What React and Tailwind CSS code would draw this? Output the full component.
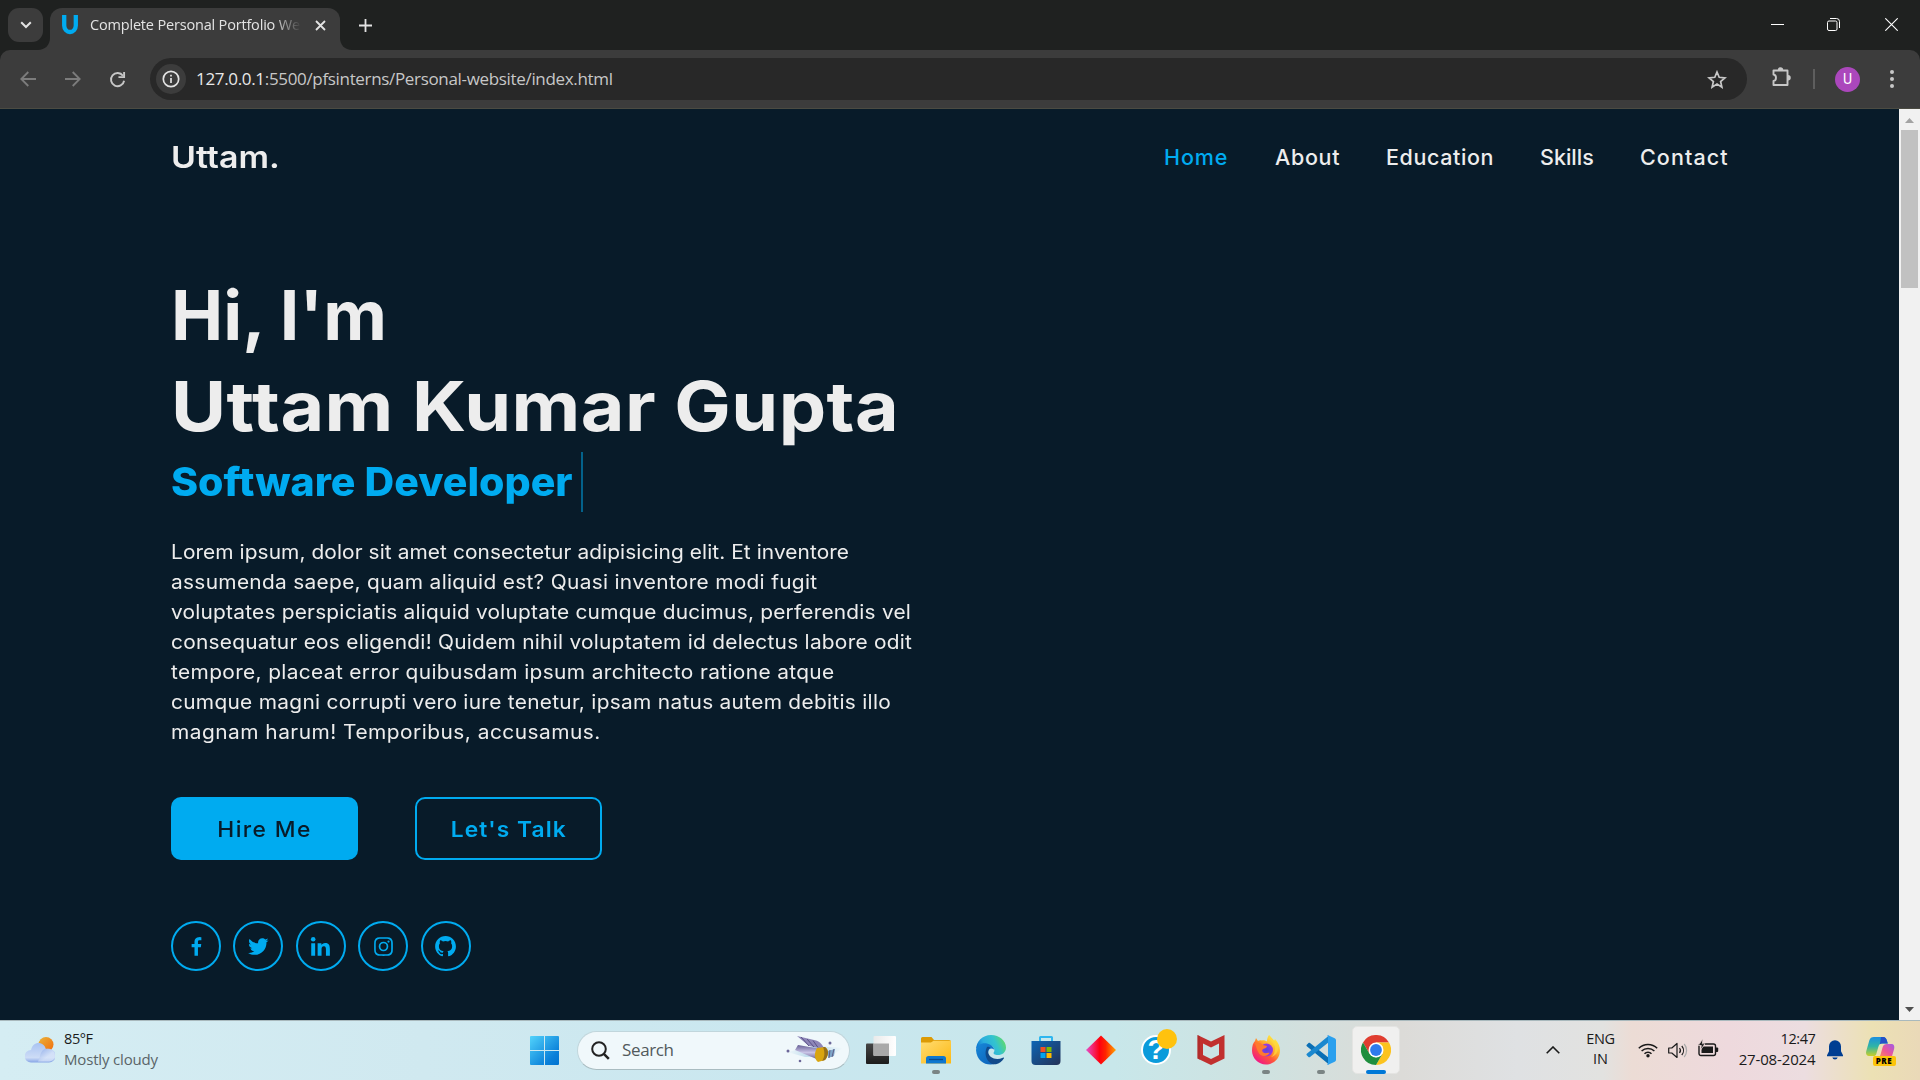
import React from "react";
import {
  BiLogoFacebook,
  BiLogoTwitter,
  BiLogoLinkedin,
  BiLogoInstagram,
  BiLogoGithub,
} from "react-icons/bi";

function TabStrip() {
  return (
    <div className="flex h-[50px] shrink-0 bg-[#1f2120] text-[#e3e3e3]">
      <div className="ml-2 mt-2 flex h-[34px] w-[35px] items-center justify-center rounded-[11px] bg-[#3c3c3c]">
        <svg width="12" height="8" viewBox="0 0 12 8" fill="none" stroke="#e3e3e3" strokeWidth="2">
          <path d="M1.2 1.2 6 6l4.800-4.800" />
        </svg>
      </div>
      <svg className="-ml-[5px] mt-[38px] h-3 w-3" viewBox="0 0 12 12">
        <path d="M12 0v12H0C7 12 12 7 12 0Z" fill="#3c3c3c" />
      </svg>
      <div className="mt-2 flex h-[42px] w-[290px] items-start rounded-t-[12px] bg-[#3c3c3c]">
        <svg className="ml-3 mt-[7px]" width="16" height="20" viewBox="0 0 16 20" fill="none" stroke="#00abf0" strokeWidth="4.300">
          <path d="M2.200 0v10.500a5.800 6.500 0 0 0 11.600 0V0" />
        </svg>
        <div className="ml-3 w-[211px] overflow-hidden whitespace-nowrap text-[14.5px] leading-[34px] tracking-[-0.18px] [mask-image:linear-gradient(to_right,black_87%,transparent_100%)]">
          Complete Personal Portfolio We
        </div>
        <svg className="ml-[14px] mt-3" width="11" height="11" viewBox="0 0 11 11" stroke="#e3e3e3" strokeWidth="1.800">
          <path d="m1 1 9 9M10 1l-9 9" />
        </svg>
      </div>
      <svg className="mt-[38px] h-3 w-3" viewBox="0 0 12 12">
        <path d="M0 0v12h12C5 12 0 7 0 0Z" fill="#3c3c3c" />
      </svg>
      <svg className="ml-[7px] mt-[19px]" width="13" height="13" viewBox="0 0 13 13" stroke="#e3e3e3" strokeWidth="1.800">
        <path d="M6.500 0v13M0 6.500h13" />
      </svg>
      <div className="ml-auto mr-[22px] flex h-[49px] items-center">
        <svg className="mr-[43px]" width="13" height="13" viewBox="0 0 13 13" stroke="#fff" strokeWidth="1">
          <path d="M0 6.500h13" />
        </svg>
        <svg className="mr-[45px]" width="13" height="13" viewBox="0 0 13 13" fill="none" stroke="#fff" strokeWidth="1">
          <rect x=".5" y="3" width="9.500" height="9.500" rx="1.500" />
          <path d="M3 .5h6.500a3 3 0 0 1 3 3V10" />
        </svg>
        <svg width="13" height="13" viewBox="0 0 13 13" stroke="#fff" strokeWidth="1.100">
          <path d="m.3.3 12.400 12.400M12.700.3.3 12.700" />
        </svg>
      </div>
    </div>
  );
}

function Toolbar() {
  return (
    <div className="bg-[#1f2120]">
      <div className="flex h-[59px] items-center rounded-t-[10px] border-b border-[#4b4b42] bg-[#3c3c3c]">
        <svg className="ml-5" width="16" height="16" viewBox="0 0 16 16" fill="none" stroke="#7c7c7c" strokeWidth="1.800">
          <path d="M16 8H1.500M8.300 1 1.300 8l7 7" />
        </svg>
        <svg className="ml-[29px]" width="16" height="16" viewBox="0 0 16 16" fill="none" stroke="#7c7c7c" strokeWidth="1.800">
          <path d="M0 8h14.500M7.700 1l7 7-7 7" />
        </svg>
        <svg className="ml-[28px]" width="17" height="17" viewBox="0 0 18 18" fill="none" stroke="#c7c7c7" strokeWidth="2">
          <path d="M14.800 5A7 7 0 1 0 16 10.300" />
          <path d="M16 1v5.500h-6" />
        </svg>
        <div className="ml-6 flex h-[42px] w-[1597px] items-center rounded-full bg-[#282828]">
          <div className="ml-[6px] flex h-[30px] w-[30px] items-center justify-center rounded-full bg-[#3c3c3c]">
            <svg width="18" height="18" viewBox="0 0 18 18" fill="none" stroke="#e3e3e3" strokeWidth="1.700">
              <circle cx="9" cy="9" r="7.700" />
              <path d="M9 8v5M9 4.800v1.700" />
            </svg>
          </div>
          <span className="ml-[10px] whitespace-nowrap text-[17px] leading-[42px] tracking-[-0.33px] text-[#c7c7c7]">
            <span className="text-[#e8e8e8]">127.0.0.1</span>:5500/pfsinterns/Personal-website/index.html
          </span>
          <svg className="ml-auto mr-5" width="20" height="19" viewBox="0 0 20 19" fill="none" stroke="#c7c7c7" strokeWidth="1.700">
            <path d="m10 2 2.200 5.300 5.700.5-4.300 3.700 1.300 5.600L10 14.100l-4.900 3 1.300-5.600L2.100 7.800l5.700-.5Z" />
          </svg>
        </div>
        <svg className="mb-1 ml-6" width="21" height="21" viewBox="0 0 21 21">
          <path d="M2.500 3.500h14v14.500h-14v-4c3.300-.3 3.300-6.200 0-6.500Z" fill="none" stroke="#c7c7c7" strokeWidth="1.900" strokeLinejoin="round" />
          <path d="M6.800 3a2.700 2.700 0 0 1 5.400 0ZM17 8a2.700 2.700 0 0 1 0 5.500Z" fill="#c7c7c7" />
        </svg>
        <div className="ml-[21px] h-5 w-[2px] bg-[#5e5e5e]" />
        <div className="ml-5 flex h-[25px] w-[25px] items-center justify-center rounded-full bg-[#ab47bc] font-['Roboto'] text-[14px] text-white">
          U
        </div>
        <div className="ml-[30px] flex flex-col gap-[3px]">
          <div className="h-1 w-1 rounded-full bg-[#c7c7c7]" />
          <div className="h-1 w-1 rounded-full bg-[#c7c7c7]" />
          <div className="h-1 w-1 rounded-full bg-[#c7c7c7]" />
        </div>
      </div>
    </div>
  );
}

const INTRO = [
  ["Lorem ipsum, dolor sit amet consectetur adipisicing elit. Et inventore", "tracking-[0.075px]"],
  ["assumenda saepe, quam aliquid est? Quasi inventore modi fugit", "tracking-[0.285px]"],
  ["voluptates perspiciatis aliquid voluptate cumque ducimus, perferendis vel", "tracking-[0.203px]"],
  ["consequatur eos eligendi! Quidem nihil voluptatem id delectus labore odit", "tracking-[0.235px]"],
  ["tempore, placeat error quibusdam ipsum architecto ratione atque", "tracking-[0.34px]"],
  ["cumque magni corrupti vero iure tenetur, ipsam natus autem debitis illo", "tracking-[0.275px]"],
  ["magnam harum! Temporibus, accusamus.", "tracking-[0.45px]"],
];

const SOCIALS = [BiLogoFacebook, BiLogoTwitter, BiLogoLinkedin, BiLogoInstagram, BiLogoGithub];

function Page() {
  return (
    <div className="flex min-h-0 flex-1">
      <div className="flex-1 whitespace-nowrap bg-[#081b29] pl-[171px] pr-[170px] font-['Inter',sans-serif] text-[#ededed] [font-optical-sizing:none]">
        <header className="flex h-24 items-center justify-between">
          <div className="origin-left scale-x-[1.13] text-[30px] font-semibold">Uttam.</div>
          <nav className="flex text-[21.5px] font-medium">
            <a className="w-[111px] tracking-[0.9px] text-[#00abf0]">Home</a>
            <a className="w-[111px] tracking-[0.7px]">About</a>
            <a className="w-[154px] tracking-[0.6px]">Education</a>
            <a className="w-[100px]">Skills</a>
            <a className="w-[89px] tracking-[1.1px]">Contact</a>
          </nav>
        </header>
        <main className="pt-[65px]">
          <h1 className="text-[68.5px] font-bold leading-[91px]">
            <div className="origin-left scale-x-[1.02]">Hi, I'm</div>
            <div className="origin-left scale-x-[1.1] tracking-[0.4px]">Uttam Kumar Gupta</div>
          </h1>
          <div className="flex h-[60px] items-center">
            <div className="w-[402px] pt-[2px]">
              <div className="origin-left scale-x-[1.04] text-[39.5px] font-extrabold text-[#00abf0]">Software Developer</div>
            </div>
            <div className="ml-2 h-[60px] w-[2px] bg-[#03628b]" />
          </div>
          <p className="mt-[25px] origin-left scale-x-[1.07] text-[19.5px] leading-[30px]">
            {INTRO.map(([line, tracking]) => (
              <span key={line} className={"block " + tracking}>{line}</span>
            ))}
          </p>
          <div className="mt-[50px] flex gap-[57px] text-[21.5px] font-semibold">
            <div className="flex h-[63px] w-[187px] items-center justify-center rounded-[10px] bg-[#00abf0] pt-px font-medium text-[#081b29]">
              <span className="scale-x-[1.06] tracking-[1.3px]">Hire Me</span>
            </div>
            <div className="flex h-[63px] w-[187px] items-center justify-center rounded-[10px] border-2 border-[#00abf0] pt-px text-[#00abf0]">
              <span className="scale-x-[1.06] tracking-[1px]">Let's Talk</span>
            </div>
          </div>
          <div className="mt-[61px] flex gap-[12.4px]">
            {SOCIALS.map((Icon, i) => (
              <div key={i} className="flex h-[50px] w-[50px] items-center justify-center rounded-full border-2 border-[#00abf0]">
                <Icon className="h-[25px] w-[25px] text-[#00abf0]" />
              </div>
            ))}
          </div>
        </main>
      </div>
      <div className="flex w-[21px] flex-col items-center bg-[#f1f1f1]">
        <svg className="mt-[9px] shrink-0" width="9" height="5" viewBox="0 0 9 5"><path d="M4.500 0 9 5H0Z" fill="#a3a3a3" /></svg>
        <div className="mt-[7px] h-[158px] w-[17px] bg-[#c1c1c1]" />
        <svg className="mb-2 mt-auto" width="9" height="5" viewBox="0 0 9 5"><path d="M0 0h9L4.500 5Z" fill="#505050" /></svg>
      </div>
    </div>
  );
}

function WeatherIcon() {
  return (
    <svg width="30" height="26" viewBox="0 0 30 26">
      <defs>
        <linearGradient id="sun" x1="0" y1="0" x2="1" y2="1"><stop offset="0" stopColor="#e9b43b" /><stop offset="1" stopColor="#f26a0c" /></linearGradient>
        <linearGradient id="cloud" x1="0" y1="0" x2="0" y2="1"><stop offset="0" stopColor="#a9c3f2" /><stop offset=".75" stopColor="#cddcf6" /><stop offset="1" stopColor="#86a5e6" /></linearGradient>
        <linearGradient id="puff" x1="0" y1="0" x2="1" y2="1"><stop offset="0" stopColor="#7f9fe4" /><stop offset=".6" stopColor="#d9e5f9" /></linearGradient>
      </defs>
      <circle cx="21" cy="7.500" r="7.500" fill="url(#sun)" />
      <path d="M6 25.500a6 6 0 0 1 0-12.500C7 8.500 10 6 13.500 6s6.500 2.500 7.300 6H24a6.500 6.500 0 0 1 0 13.500Z" fill="url(#cloud)" />
      <path d="M15 19c1-5 4-8 8-7.500 9 1 9 13 0 13H13Z" fill="url(#puff)" opacity=".7" />
    </svg>
  );
}

function WindowsIcon() {
  return (
    <svg width="29" height="29" viewBox="0 0 29 29">
      <defs>
        <linearGradient id="win" x1="0" y1="0" x2="29" y2="29" gradientUnits="userSpaceOnUse"><stop offset="0" stopColor="#52d3fb" /><stop offset=".75" stopColor="#0a80d9" /><stop offset="1" stopColor="#0173d0" /></linearGradient>
      </defs>
      <path d="M1 0h13v14H0V1a1 1 0 0 1 1-1ZM15 0h13a1 1 0 0 1 1 1v13H15ZM0 15h14v14H1a1 1 0 0 1-1-1ZM15 15h14v13a1 1 0 0 1-1 1H15Z" fill="url(#win)" />
    </svg>
  );
}

function FlashlightArt() {
  return (
    <svg width="62" height="32" viewBox="0 0 62 32">
      <defs>
        <linearGradient id="beam" x1="0" y1="0" x2="1" y2="0"><stop offset="0" stopColor="#a6cfe6" stopOpacity="0" /><stop offset=".5" stopColor="#9dc8e2" /><stop offset="1" stopColor="#b8dcec" stopOpacity="0" /></linearGradient>
        <linearGradient id="tube" x1="0" y1="0" x2="0" y2="1"><stop offset="0" stopColor="#675f96" /><stop offset=".5" stopColor="#c9c4e6" /><stop offset="1" stopColor="#5d5589" /></linearGradient>
      </defs>
      <path d="M4 18 32 12l28 2-12 8-26 1Z" fill="url(#beam)" opacity=".8" />
      <path d="m14 2 17 4c6 1 9 5 10 9L26 12Z" fill="#8e86b8" />
      <path d="m18 3 8 9M24 5l7 8M30 6.500l5 7" stroke="#5a5288" strokeWidth="1" />
      <path d="m15 11 23 4-2 11-24-10Z" fill="url(#tube)" />
      <path d="m34 14 8-1c4 3 4 8 0 13l-7 2c-4-3-4-9-1-14Z" fill="#d9a50f" />
      <path d="m40 13 2 0c4 3 4 8 0 13l-3 1c3-4 3-9 1-14Z" fill="#96701a" />
      <path d="m45 17 7-2-1 7-6 2Z" fill="#7ea6c9" />
      <path d="m47 16-1 8M51 15l-2 8" stroke="#5e5d86" strokeWidth="1" />
      <circle cx="5" cy="17" r="1.500" fill="#6c6799" />
      <circle cx="17" cy="27" r="1.300" fill="#6c6799" />
      <circle cx="47" cy="9" r="1.500" fill="#6c6799" />
    </svg>
  );
}

function TaskViewIcon() {
  return (
    <svg width="30" height="30" viewBox="0 0 30 30">
      <defs>
        <linearGradient id="tvd" x1="0" y1="0" x2="0" y2="1"><stop offset="0" stopColor="#454545" /><stop offset="1" stopColor="#1c1c1c" /></linearGradient>
        <linearGradient id="tvl" x1="0" y1="0" x2="1" y2="0"><stop offset="0" stopColor="#e9eaea" /><stop offset="1" stopColor="#fff" /></linearGradient>
      </defs>
      <rect y="8.500" width="23" height="20.500" rx="1" fill="url(#tvd)" />
      <rect x="7.500" y="1" width="22.500" height="20" rx="1" fill="url(#tvl)" />
      <path d="M7.500 8.500H23V21H8.500a1 1 0 0 1-1-1Z" fill="#a9a9a9" />
    </svg>
  );
}

function FolderIcon() {
  return (
    <svg width="30" height="30" viewBox="0 0 30 30">
      <defs>
        <linearGradient id="fold" x1="0" y1="0" x2="1" y2="1"><stop offset="0" stopColor="#ffdc72" /><stop offset="1" stopColor="#fdb913" /></linearGradient>
      </defs>
      <path d="M0 3.500A1.500 1.500 0 0 1 1.500 2h9l2.500 3h15a2 2 0 0 1 2 2v5H0Z" fill="#dc9a05" />
      <path d="M0 7.500h10l2.500-1.700H30v22.700H0Z" fill="url(#fold)" />
      <path d="M5 28.500v-5a2.500 2.500 0 0 1 2.500-2.500h15a2.500 2.500 0 0 1 2.500 2.500v5Z" fill="#0f78cf" />
      <path d="M8 24.500h14" stroke="#0a4a8c" strokeWidth="1.300" />
    </svg>
  );
}

function EdgeIcon() {
  return (
    <svg width="30" height="30" viewBox="0 0 30 30">
      <defs>
        <linearGradient id="edg" x1="0" y1=".6" x2="1" y2=".3"><stop offset="0" stopColor="#0a6fd0" /><stop offset=".3" stopColor="#2badde" /><stop offset=".65" stopColor="#33c3cf" /><stop offset="1" stopColor="#63dc62" /></linearGradient>
        <linearGradient id="edb" x1="0" y1="0" x2="1" y2="1"><stop offset="0" stopColor="#1787d8" /><stop offset="1" stopColor="#0b5bb4" /></linearGradient>
      </defs>
      <path d="M0 15C0 6.500 6.500 0 15 0s15 6 15 12.500c0 5-4 7.500-8 7.500-3.500 0-5-1.500-4.300-2.500 2.500-3-1-7.500-5.700-7.500C6 9 1 11 0 15Z" fill="url(#edg)" />
      <path d="M0 15c1-5 6-7.500 11-6.500 4 .8 7 3.500 7.500 7-1-3-6.500-3-6.500 2.500 0 6 6 9.500 13 7.500C17 33 1 30.500 0 15Z" fill="url(#edb)" />
      <path d="M11 12c-4 8 1 18 9 17.300 3-.8 6-2.800 8-6 .2-.8-.5-1-1.200-.6C20 26 12.500 22.500 12.200 17c-.1-2 .8-3.700 2.300-4.300-1-.8-2.500-1-3.500-.7Z" fill="#114a8b" />
    </svg>
  );
}

function StoreIcon() {
  return (
    <svg width="30" height="30" viewBox="0 0 30 30">
      <defs>
        <linearGradient id="sto" x1="0" y1="0" x2="1" y2="1"><stop offset="0" stopColor="#0d65b5" /><stop offset="1" stopColor="#243256" /></linearGradient>
      </defs>
      <path d="M8 7V2.500A1.500 1.500 0 0 1 9.500 1h11A1.500 1.500 0 0 1 22 2.500V7h-2V3H10v4Z" fill="#2fb6ef" />
      <path d="M.5 6h29v20a4 4 0 0 1-4 4h-21a4 4 0 0 1-4-4Z" fill="url(#sto)" />
      <path d="M9.500 12H14.500v5H9.500Z" fill="#f25022" />
      <path d="M15.500 12h5v5h-5Z" fill="#7fba00" />
      <path d="M9.500 18h5v5h-5Z" fill="#00a4ef" />
      <path d="M15.500 18h5v5h-5Z" fill="#ffb900" />
    </svg>
  );
}

function DiamondIcon() {
  return (
    <svg width="30" height="30" viewBox="0 0 30 30">
      <defs>
        <linearGradient id="dia" x1="0" y1="0" x2="1" y2="0"><stop offset=".05" stopColor="#e845b8" /><stop offset=".45" stopColor="#ff0010" /><stop offset=".65" stopColor="#ff2400" /><stop offset="1" stopColor="#ffa400" /></linearGradient>
      </defs>
      <path d="M15 .5 30 15 15 29.500 0 15Z" fill="url(#dia)" />
    </svg>
  );
}

function HelpIcon() {
  return (
    <div className="relative h-[30px] w-[30px]">
      <div className="flex h-[30px] w-[30px] items-center justify-center rounded-full border-2 border-white bg-[#0a9bdb] font-['Liberation_Sans',sans-serif] text-[28px] font-bold leading-none text-white">
        ?
      </div>
      <div className="absolute -top-[6px] left-[16px] h-5 w-5 rounded-full bg-[#ffc20e]" />
    </div>
  );
}

function McAfeeIcon() {
  return (
    <svg width="30" height="30" viewBox="0 0 30 30">
      <path d="M1.500 0 15 6.500 28.500 0v23.500L15 30 1.500 23.500Z" fill="#c1302f" />
      <path d="M7 8.500 15 12.500l8-4v11.500L15 24 7 20Z" fill="#c9e3e5" />
      <path d="M1.500 0v23.500L4 24.700V1.200Z" fill="#a22626" opacity=".5" />
    </svg>
  );
}

function FirefoxIcon() {
  return (
    <svg width="30" height="30" viewBox="0 0 30 30">
      <defs>
        <linearGradient id="ffx" x1=".85" y1=".1" x2=".2" y2=".95"><stop offset="0" stopColor="#fff04a" /><stop offset=".35" stopColor="#ffb02a" /><stop offset=".6" stopColor="#ff5a36" /><stop offset="1" stopColor="#f0148c" /></linearGradient>
        <radialGradient id="ffp"><stop offset="0" stopColor="#5b45d8" /><stop offset="1" stopColor="#9b38e0" /></radialGradient>
      </defs>
      <path d="M18 0c2 2 4 4 5 6l1-2c3 3 5 7 5 11.500C29 23 23 29.500 15 29.500S1 23 1 15.500C1 11 2 8 4 6l1-3 2 3c1-.7 2.500-1 4-.5 2-.5 4 .5 5 1 0-2 .5-4.500 2-6.500Z" fill="url(#ffx)" />
      <circle cx="15.500" cy="15" r="6.500" fill="url(#ffp)" />
      <path d="M4 8c3-1 6 0 8 2l4 1c0 1.500-2 2.500-4 3-1.500 1-1 3 1 4 2 .5 4-.5 5.500 0-2 4-9 4-11-.5C6 15 5 11 4 8Z" fill="#ff7a2e" />
      <path d="M18 0c0 5 5 7 6 12 .5 4-1 8-4 10 5-1 8-6 7-12-1-4-6-5-9-10Z" fill="#ffd83c" opacity=".75" />
    </svg>
  );
}

function VsCodeIcon() {
  return (
    <svg width="30" height="30" viewBox="0 0 30 30">
      <path d="M1 9.500 2.500 8c.5-.4 1-.4 1.500 0L23 23v6.500L.8 11.200c-.5-.5-.5-1.200.2-1.700Z" fill="#0b6fb5" />
      <path d="M1 20.500 2.500 22c.5.400 1 .4 1.500 0L23 7V.5L.8 18.800c-.5.500-.5 1.200.2 1.700Z" fill="#1b88cf" />
      <path d="M22.200.3 28.700 3.300A2 2 0 0 1 30 5v20a2 2 0 0 1-1.300 1.800l-6.500 3c-.8.300-1.200 0-.7-.8.300-.4.500-.6.500-1V2c0-.4-.2-.6-.5-1-.3-.6.100-1 .7-.7Z" fill="#2ba0ee" />
    </svg>
  );
}

function ChromeIcon() {
  return (
    <svg width="30" height="30" viewBox="0 0 30 30">
      <path d="M2 7.500a15 15 0 0 1 26 0H15L8.500 18.800Z" fill="#e03d30" />
      <path d="M28 7.500A15 15 0 0 1 15 30l6.500-11.300L21.500 11 15 7.500Z" fill="#fcc31e" />
      <path d="M15 30A15 15 0 0 1 2 7.500l6.500 11.300L15 22.500l6.500-3.800Z" fill="#1f8e3e" />
      <circle cx="15" cy="15" r="7.500" fill="#fff" />
      <circle cx="15" cy="15" r="5.900" fill="#2f7bec" />
    </svg>
  );
}

const APPS = [
  { Icon: TaskViewIcon },
  { Icon: FolderIcon, open: true },
  { Icon: EdgeIcon },
  { Icon: StoreIcon },
  { Icon: DiamondIcon },
  { Icon: HelpIcon },
  { Icon: McAfeeIcon },
  { Icon: FirefoxIcon, open: true },
  { Icon: VsCodeIcon, open: true },
  { Icon: ChromeIcon, active: true },
];

function Taskbar() {
  return (
    <div className="h-[60px] shrink-0 border-t border-[#a9b9bd] bg-[linear-gradient(90deg,#d5edf3_0%,#d0e9f0_22%,#c9e7ef_42%,#c8e7ea_58%,#cfe2e0_66%,#dcdbd8_73%,#dfe1e3_79%,#e2e2e0_83.5%,#ecdcd5_85%,#eed9dd_90%,#ecdde0_94%,#ece1b4_97.5%,#ead9b8_100%)] text-[14.5px] text-[#1a1a1a]">
      <div className="flex h-[58px] items-center whitespace-nowrap">
        <div className="ml-[25px]"><WeatherIcon /></div>
        <div className="mb-[3px] ml-[9px] w-[466px] leading-5">
          <div className="tracking-[-0.4px]">85°F</div>
          <div className="text-[15px] tracking-[-0.17px] text-[#5a6468]">Mostly cloudy</div>
        </div>
        <WindowsIcon />
        <div className="ml-[18px] flex h-[39px] w-[273px] items-center rounded-full border border-[#c1d6dc] border-b-[#a9bcc1] bg-[#f0f8fb]">
          <svg className="ml-[13px]" width="19" height="19" viewBox="0 0 19 19" fill="none" stroke="#222" strokeWidth="2">
            <circle cx="8" cy="8" r="6.800" />
            <path d="m12.800 12.800 5 5" strokeWidth="2.500" />
          </svg>
          <span className="ml-[12px] text-[17px] tracking-[-0.37px] text-[#525a5c]">Search</span>
          <div className="ml-auto mr-1"><FlashlightArt /></div>
        </div>
        <div className="ml-[3.5px] flex">
          {APPS.map(({ Icon, open, active }, i) => (
            <div key={i} className="flex h-[58px] w-[55px] items-center justify-center">
              <div className={active ? "relative flex h-12 w-12 items-center justify-center rounded-[5px] border border-[#e4e4e2] bg-[#f0f0ef]" : "relative flex h-12 w-12 items-center justify-center"}>
                <Icon />
                {open && <div className="absolute bottom-0 left-5 h-1 w-2 rounded-full bg-[#7a8484]" />}
                {active && <div className="absolute -bottom-px left-[13px] h-1 w-5 rounded-full bg-[#0078d7]" />}
              </div>
            </div>
          ))}
        </div>
        <svg className="ml-[142px]" width="14" height="8" viewBox="0 0 14 8" fill="none" stroke="#1a1a1a" strokeWidth="1.600">
          <path d="m.7 7.300 6.300-6.300 6.300 6.300" />
        </svg>
        <div className="mb-[2px] ml-[26px] w-[30px] text-center leading-5">
          <div className="tracking-[-0.3px]">ENG</div>
          <div>IN</div>
        </div>
        <svg className="ml-[22px]" width="20" height="16" viewBox="0 0 20 16" fill="none" stroke="#1a1a1a" strokeWidth="1.500">
          <path d="M.8 6.300a13 13 0 0 1 18.400 0M3.600 9a9.200 9.200 0 0 1 12.800 0M6.500 11.800a5 5 0 0 1 7 0" />
          <circle cx="10" cy="13.700" r="1.700" fill="#1a1a1a" stroke="none" />
        </svg>
        <svg className="ml-[10px]" width="20" height="17" viewBox="0 0 20 17" fill="none" stroke="#1a1a1a" strokeWidth="1.200">
          <path d="M.7 6h3.100L9 1.500v14L3.800 11H.7Z" strokeLinejoin="round" />
          <path d="M11.500 6c1.200 1.500 1.200 3.500 0 5M13.800 4c2.200 2.600 2.200 6.400 0 9" />
          <path d="M16.200 2c3.200 3.800 3.200 9.200 0 13" stroke="#aaa" />
        </svg>
        <svg className="mb-1 ml-[10px]" width="21" height="18" viewBox="0 0 21 18">
          <rect x="1" y="5" width="16.500" height="11.500" rx="2" fill="none" stroke="#1a1a1a" strokeWidth="1.400" />
          <rect x="3.500" y="7.500" width="11.500" height="6.500" fill="#1a1a1a" />
          <path d="M18 8.500h1.200a1 1 0 0 1 1 1v2.500a1 1 0 0 1-1 1H18Z" fill="#1a1a1a" />
          <path d="M5-.5.300 6.500h3L2.500 11 7 4.800H4.300Z" fill="#1a1a1a" stroke="#efdadb" strokeWidth=".8" />
        </svg>
        <div className="mb-[3px] ml-[19px] w-[78px] text-right leading-5">
          <div className="tracking-[-0.4px]">12:47</div>
          <div className="text-[15px] tracking-[-0.14px]">27-08-2024</div>
        </div>
        <svg className="ml-[11px]" width="16" height="20" viewBox="0 0 16 20" fill="#003e92">
          <path d="M8 .3a6 6 0 0 1 6 6v5l2 4v1H0v-1l2-4v-5a6 6 0 0 1 6-6ZM5.300 17.500h5.400a2.800 2.800 0 0 1-5.400 0Z" />
        </svg>
        <div className="relative ml-[23px] mt-[2px] h-[29px] w-[30px]">
          <svg width="29" height="28" viewBox="0 0 29 28">
            <defs>
              <linearGradient id="cpa" x1="0" y1="0" x2="0" y2="1"><stop offset="0" stopColor="#1a8fe0" /><stop offset=".5" stopColor="#31b5a5" /><stop offset="1" stopColor="#c9cf28" /></linearGradient>
              <linearGradient id="cpb" x1="1" y1="0" x2="0" y2="1"><stop offset="0" stopColor="#a05be8" /><stop offset=".5" stopColor="#ee5595" /><stop offset="1" stopColor="#fb9a4b" /></linearGradient>
            </defs>
            <path d="M8 0h9c2.500 0 3.500 2 4 4l.8 2.500H16c-2 0-3 1-3.700 3.500l-2 7C9.800 18.500 9 19 7.500 19H3c-2.500 0-3.500-2-2.700-5l3-10.500C4 1 5.500 0 8 0Z" fill="url(#cpa)" />
            <path d="M15 0h2c2.500 0 3.500 2 4 4l.8 2.500H16c-1 0-1.600.2-2.200.7Z" fill="#2350c8" />
            <path d="M21 7h4.500c2.500 0 3.300 2 2.600 5l-2.600 9H11c2 0 3-1.500 3.700-4l2-7C17.400 8 18.500 7 21 7Z" fill="url(#cpb)" />
          </svg>
          <div className="absolute left-[7px] top-[19px] flex h-[10px] w-[23px] items-center justify-center rounded-[2px] bg-[#fcc40a] text-[8px] font-extrabold leading-none tracking-[0.6px] text-black">
            PRE
          </div>
        </div>
      </div>
    </div>
  );
}

export default function App() {
  return (
    <div className="flex h-[1080px] w-[1920px] flex-col overflow-hidden font-['Open_Sans',sans-serif]">
      <TabStrip />
      <Toolbar />
      <Page />
      <Taskbar />
    </div>
  );
}
